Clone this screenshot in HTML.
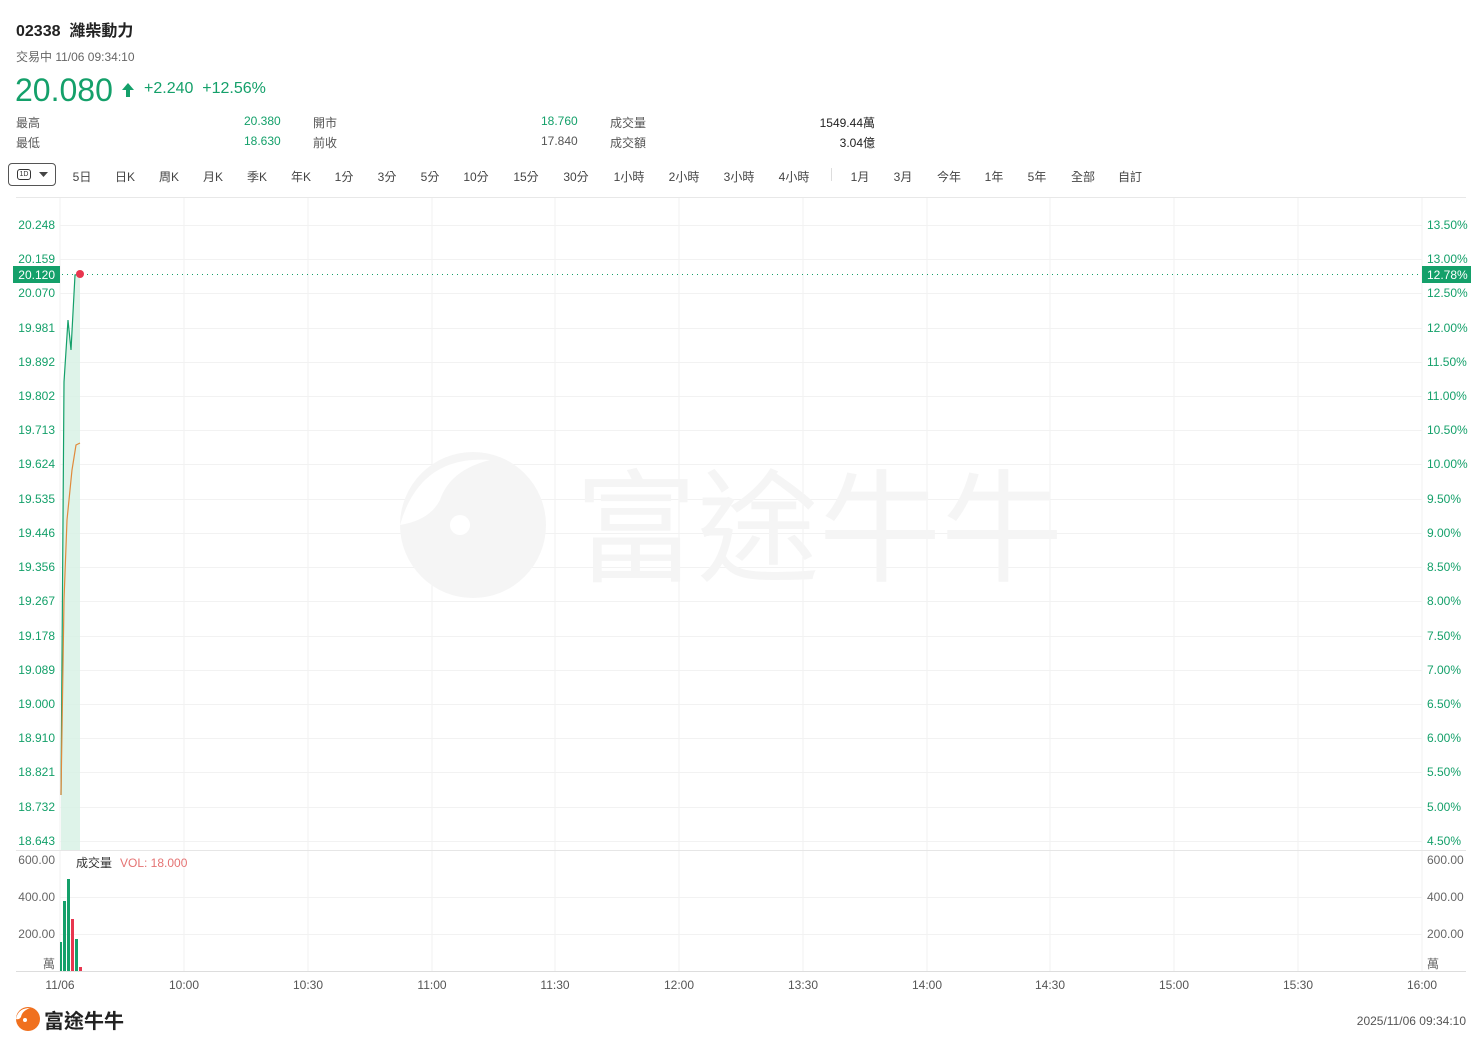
<!DOCTYPE html>
<html><head><meta charset="utf-8"><style>
*{margin:0;padding:0;box-sizing:border-box}
body{width:1482px;height:1047px;background:#fff;font-family:"Liberation Sans","Noto Sans CJK TC",sans-serif;position:relative;overflow:hidden;color:#333}
.a{position:absolute;white-space:nowrap}
.g{color:#14a06a}
.s{font-size:12px}
.tab{position:absolute;top:168px;font-size:12px;color:#444;transform:translateX(-50%)}
</style></head><body>
<div class="a" style="left:16px;top:17px;font-size:16px;font-weight:bold;color:#222">02338&nbsp; 濰柴動力</div>
<div class="a s" style="left:16px;top:48px;color:#666">交易中 11/06 09:34:10</div>
<div class="a g" style="left:15px;top:72px;font-size:32px;font-weight:500">20.080</div>
<svg class="a" style="left:121px;top:82px" width="14" height="16" viewBox="0 0 14 16"><path d="M7 1L1 8h4v7h4V8h4z" fill="#14a06a"/></svg>
<div class="a g" style="left:144px;top:80px;font-size:16px">+2.240&nbsp;&nbsp;+12.56%</div>
<div class="a s" style="left:16px;top:114px;color:#555">最高</div>
<div class="a s" style="left:16px;top:134px;color:#555">最低</div>
<div class="a s g" style="left:244px;top:114px">20.380</div>
<div class="a s g" style="left:244px;top:134px">18.630</div>
<div class="a s" style="left:313px;top:114px;color:#555">開市</div>
<div class="a s" style="left:313px;top:134px;color:#555">前收</div>
<div class="a s g" style="left:541px;top:114px">18.760</div>
<div class="a s" style="left:541px;top:134px;color:#555">17.840</div>
<div class="a s" style="left:610px;top:114px;color:#555">成交量</div>
<div class="a s" style="left:610px;top:134px;color:#555">成交額</div>
<div class="a s" style="right:607px;top:114px;color:#222">1549.44萬</div>
<div class="a s" style="right:607px;top:134px;color:#222">3.04億</div>
<div class="a" style="left:8px;top:163px;width:48px;height:23px;border:1px solid #555;border-radius:4px"></div>
<div class="a" style="left:17px;top:169px;width:14px;height:11px;border:1px solid #333;border-radius:3px;font-size:7px;line-height:9px;text-align:center">1D</div>
<svg class="a" style="left:39px;top:172px" width="9" height="6"><path d="M0 0h9L4.5 5z" fill="#444"/></svg>
<div class="tab" style="left:82px">5日</div><div class="tab" style="left:125px">日K</div><div class="tab" style="left:169px">周K</div><div class="tab" style="left:213px">月K</div><div class="tab" style="left:257px">季K</div><div class="tab" style="left:301px">年K</div><div class="tab" style="left:344px">1分</div><div class="tab" style="left:387px">3分</div><div class="tab" style="left:430px">5分</div><div class="tab" style="left:476px">10分</div><div class="tab" style="left:526px">15分</div><div class="tab" style="left:576px">30分</div><div class="tab" style="left:629px">1小時</div><div class="tab" style="left:684px">2小時</div><div class="tab" style="left:739px">3小時</div><div class="tab" style="left:794px">4小時</div>
<div class="a" style="left:831px;top:168px;width:1px;height:13px;background:#ddd"></div>
<div class="tab" style="left:860px">1月</div><div class="tab" style="left:903px">3月</div><div class="tab" style="left:949px">今年</div><div class="tab" style="left:994px">1年</div><div class="tab" style="left:1037px">5年</div><div class="tab" style="left:1083px">全部</div><div class="tab" style="left:1130px">自訂</div>
<div class="a" style="left:16px;top:197px;width:1450px;height:1px;background:#e8e8e8"></div>

<svg class="a" style="left:0;top:0" width="1482" height="1047" font-family="Liberation Sans, Noto Sans CJK TC, sans-serif" font-size="12">
<g stroke="#f2f2f2" stroke-width="1">
<path d="M60 198V971M184 198V971M308 198V971M432 198V971M555 198V971M679 198V971M803 198V971M927 198V971M1050 198V971M1174 198V971M1298 198V971M1422 198V971"/>
<path d="M60 225.5H1422M60 259.5H1422M60 293.5H1422M60 328.5H1422M60 362.5H1422M60 396.5H1422M60 430.5H1422M60 464.5H1422M60 499.5H1422M60 533.5H1422M60 567.5H1422M60 601.5H1422M60 636.5H1422M60 670.5H1422M60 704.5H1422M60 738.5H1422M60 772.5H1422M60 807.5H1422M60 841.5H1422M60 897.5H1422M60 934.5H1422"/>
</g>
<path d="M16 850.5H1466" stroke="#e6e6e6"/>
<path d="M16 971.5H1466" stroke="#ddd"/>
<g fill="#f5f5f5">
<circle cx="473" cy="525" r="73"/>
<path d="M400 525 Q420 455 490 460 Q450 470 440 500 Q430 520 400 525Z" fill="#fff"/>
<circle cx="460" cy="525" r="10" fill="#fff"/>
<text x="575" y="572" font-size="122" fill="#f5f5f5">富途牛牛</text>
</g>
<g fill="#14a06a" text-anchor="end">
<text x="55" y="229">20.248</text><text x="55" y="263">20.159</text><text x="55" y="297">20.070</text><text x="55" y="332">19.981</text><text x="55" y="366">19.892</text><text x="55" y="400">19.802</text><text x="55" y="434">19.713</text><text x="55" y="468">19.624</text><text x="55" y="503">19.535</text><text x="55" y="537">19.446</text><text x="55" y="571">19.356</text><text x="55" y="605">19.267</text><text x="55" y="640">19.178</text><text x="55" y="674">19.089</text><text x="55" y="708">19.000</text><text x="55" y="742">18.910</text><text x="55" y="776">18.821</text><text x="55" y="811">18.732</text><text x="55" y="845">18.643</text>
</g>
<g fill="#14a06a">
<text x="1427" y="229">13.50%</text><text x="1427" y="263">13.00%</text><text x="1427" y="297">12.50%</text><text x="1427" y="332">12.00%</text><text x="1427" y="366">11.50%</text><text x="1427" y="400">11.00%</text><text x="1427" y="434">10.50%</text><text x="1427" y="468">10.00%</text><text x="1427" y="503">9.50%</text><text x="1427" y="537">9.00%</text><text x="1427" y="571">8.50%</text><text x="1427" y="605">8.00%</text><text x="1427" y="640">7.50%</text><text x="1427" y="674">7.00%</text><text x="1427" y="708">6.50%</text><text x="1427" y="742">6.00%</text><text x="1427" y="776">5.50%</text><text x="1427" y="811">5.00%</text><text x="1427" y="845">4.50%</text>
</g>
<path d="M61 795L64 382L68 320L71 350L75 275L80 274V850H61Z" fill="#d6f0e3" opacity="0.8"/>
<path d="M61 795L64 382L68 320L71 350L75 275L80 274" fill="none" stroke="#14a06a" stroke-width="1.2"/>
<path d="M61 795L64 600L67 520L72 470L76 445L80 443" fill="none" stroke="#e08a3c" stroke-width="1.2"/>
<path d="M62 274.5H1422" stroke="#14a06a" stroke-dasharray="1 4"/>
<circle cx="80" cy="274" r="4" fill="#e8364f"/>
<rect x="13" y="266" width="47" height="17" fill="#14a06a"/>
<text x="55" y="279" fill="#fff" text-anchor="end">20.120</text>
<rect x="1422" y="266" width="49" height="17" fill="#14a06a"/>
<text x="1427" y="279" fill="#fff">12.78%</text>
<g fill="#666" text-anchor="end">
<text x="55" y="864">600.00</text><text x="55" y="901">400.00</text><text x="55" y="938">200.00</text><text x="55" y="968">萬</text>
</g>
<g fill="#666">
<text x="1427" y="864">600.00</text><text x="1427" y="901">400.00</text><text x="1427" y="938">200.00</text><text x="1427" y="968">萬</text>
</g>
<text x="76" y="867" fill="#333">成交量</text>
<text x="120" y="867" fill="#e57373">VOL: 18.000</text>
<g fill="#14a06a"><rect x="60" y="942" width="2" height="29"/><rect x="63" y="901" width="3" height="70"/><rect x="67" y="879" width="3" height="92"/><rect x="75" y="939" width="3" height="32"/></g>
<g fill="#e8364f"><rect x="71" y="919" width="3" height="52"/><rect x="79" y="967" width="3" height="4"/></g>
<g fill="#555" text-anchor="middle">
<text x="60" y="989">11/06</text><text x="184" y="989">10:00</text><text x="308" y="989">10:30</text><text x="432" y="989">11:00</text><text x="555" y="989">11:30</text><text x="679" y="989">12:00</text><text x="803" y="989">13:30</text><text x="927" y="989">14:00</text><text x="1050" y="989">14:30</text><text x="1174" y="989">15:00</text><text x="1298" y="989">15:30</text><text x="1422" y="989">16:00</text>
</g>
<text x="1466" y="1025" fill="#555" text-anchor="end">2025/11/06 09:34:10</text>
<circle cx="28" cy="1019" r="12" fill="#f0701e"/>
<path d="M16 1019 Q18 1008 30 1008 Q22 1011 21 1017 Q19 1020 16 1019Z" fill="#fff"/>
<circle cx="25" cy="1020" r="2" fill="#fff"/>
<text x="44" y="1028" font-size="20" font-weight="bold" fill="#222">富途牛牛</text>
</svg>
</body></html>
